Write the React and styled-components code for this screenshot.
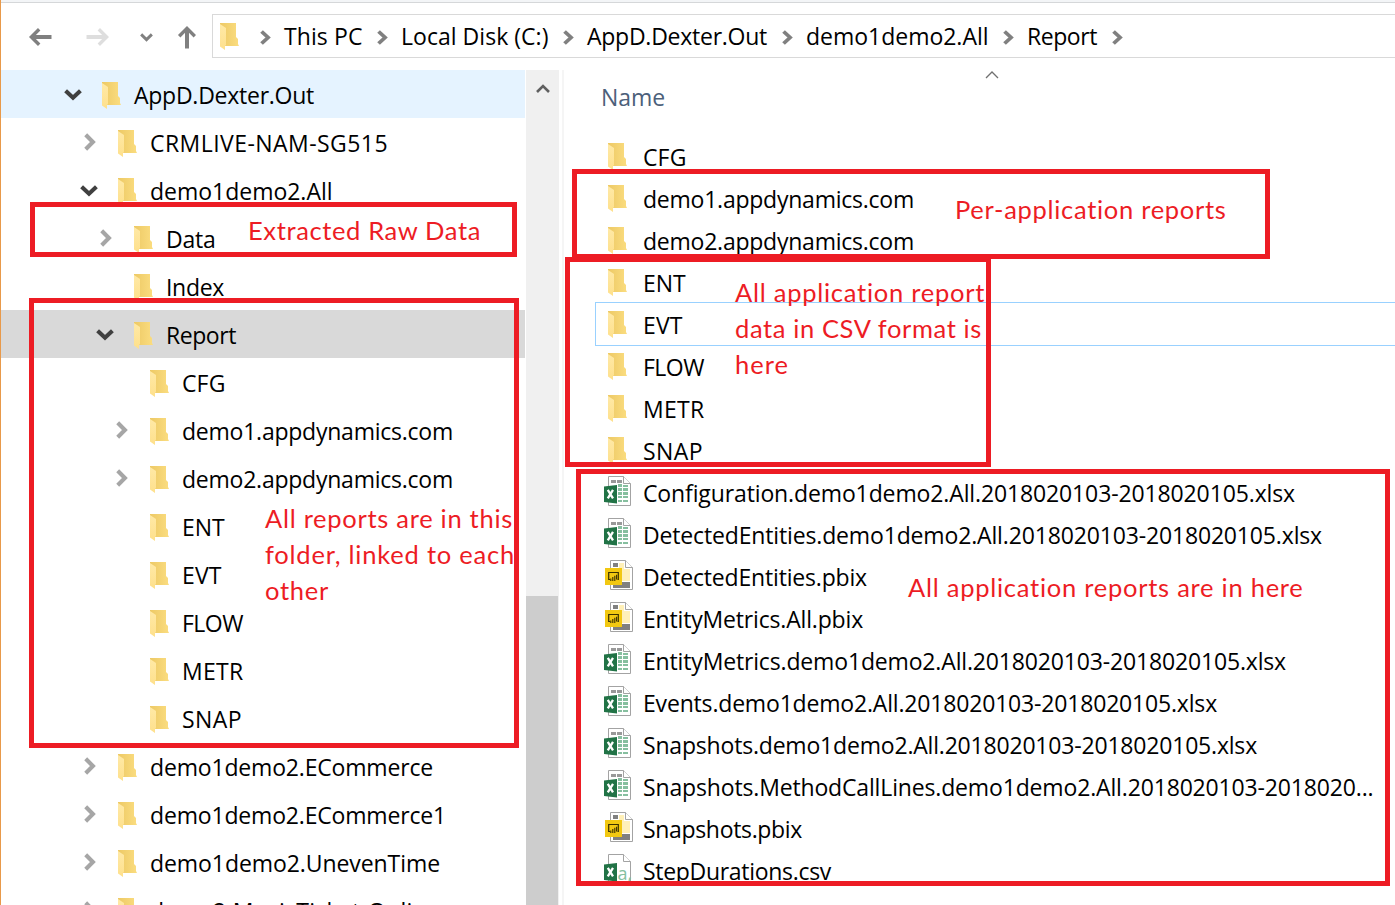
import React, { useLayoutEffect, useRef, useState } from 'react';
import styled, { createGlobalStyle, css } from 'styled-components';

const GlobalStyle = createGlobalStyle`
  * { box-sizing: border-box; }
  html, body { margin: 0; padding: 0; background: #fff; overflow: hidden; }
`;

const Window = styled.div`
  position: relative;
  display: flex;
  flex-direction: column;
  width: 1395px;
  height: 905px;
  overflow: hidden;
  background: #fff;
  border-left: 1px solid #e8994a;
  color: #000;
  font-family: 'Open Sans', 'Noto Sans', sans-serif;
  font-size: 23px;
  line-height: 32px;
`;

const TitleStrip = styled.div`
  flex: none;
  height: 3px;
  background: #f3f5f7;
  border-bottom: 1px solid #d5d7d9;
`;

const Toolbar = styled.header`
  flex: none;
  display: flex;
  height: 67px;
  padding-top: 11px;
`;

const NavButtons = styled.nav`
  flex: none;
  display: flex;
  align-items: center;
  width: 211px;
  height: 46px;
  padding-left: 27px;
`;

const NavButton = styled.button`
  display: flex;
  justify-content: center;
  width: 24px;
  padding: 0;
  margin-right: ${(p) => p.$after || 0}px;
  border: 0;
  background: none;
`;

const AddressBar = styled.div`
  flex: 1;
  display: flex;
  align-items: center;
  height: 44px;
  padding-left: 7px;
  border: 1px solid #d9d9d9;
  border-right: 0;
`;

const Crumb = styled.div`
  flex: none;
  display: flex;
  align-items: center;
  width: ${(p) => p.$width}px;
`;

const CrumbArrow = styled.span`
  display: flex;
  width: 24px;
  height: 17px;
  padding-top: 2px;
`;

const Body = styled.div`
  flex: 1;
  display: flex;
  min-height: 0;
`;

const Tree = styled.aside`
  flex: none;
  width: 524px;
  overflow: hidden;
`;

const TreeRow = styled.div`
  display: flex;
  align-items: center;
  height: 48px;
  padding-left: ${(p) => 62 + p.$level * 16}px;
  background: ${(p) => (p.$state === 'hover' ? '#e5f3ff' : p.$state === 'selected' ? '#d9d9d9' : 'transparent')};
`;

const Toggle = styled.span`
  flex: none;
  display: flex;
  justify-content: center;
  align-items: center;
  width: 20px;
  height: 20px;
  margin-right: 19px;
  padding: ${(p) => (p.$open ? '2px 0 0' : '0 0 0 2px')};
`;

const TreeIcon = styled.span`
  flex: none;
  display: flex;
  width: 32px;
  padding-top: 3px;
`;

const ScrollBar = styled.div`
  flex: none;
  display: flex;
  flex-direction: column;
  width: 33px;
  margin-left: 1px;
  background: #f0f0f0;
`;

const ScrollArrow = styled.div`
  display: flex;
  justify-content: center;
  height: 526px;
  padding-top: 13px;
`;

const ScrollThumb = styled.div`
  flex: 1;
  width: 32px;
  background: #cdcdcd;
`;

const Splitter = styled.div`
  flex: none;
  width: 2px;
  margin-left: 3px;
  background: #f5f5f5;
`;

const FilePane = styled.main`
  flex: 1;
  min-width: 0;
  padding-left: 31px;
`;

const ColumnHeader = styled.div`
  display: flex;
  flex-direction: column;
  height: 65px;
  padding-left: 6px;
  color: #4c607a;
`;

const SortMark = styled.div`
  display: flex;
  height: 11px;
  padding-left: 384px;
`;

const FileList = styled.div`
  height: 750px;
  overflow: hidden;
`;

const FileRow = styled.div`
  display: flex;
  align-items: center;
  height: 42px;
  padding-left: 8px;
  ${(p) =>
    p.$focused &&
    css`
      margin: -1px 0;
      height: 44px;
      padding-left: 7px;
      border: 1px solid #99d1ff;
      border-right: 0;
    `}
`;

const FileIcon = styled.span`
  flex: none;
  display: flex;
  width: 40px;
  padding-left: ${(p) => (p.$kind === 'folder' ? 5 : p.$kind === 'pbix' ? 2 : 1)}px;
  padding-bottom: ${(p) => (p.$kind === 'folder' ? 0 : 1)}px;
`;

const TextLine = styled.span`
  display: block;
  flex: none;
  width: max-content;
  white-space: pre;
  padding-top: ${(p) => p.$drop || 0}px;
`;

const Frame = styled.div`
  position: absolute;
  left: ${(p) => p.$x - 1}px;
  top: ${(p) => p.$y}px;
  width: ${(p) => p.$w}px;
  height: ${(p) => p.$h}px;
  border: 5px solid #ed1c24;
`;

const Note = styled.div`
  position: absolute;
  left: ${(p) => p.$x - 1}px;
  top: ${(p) => p.$y}px;
  color: #ed1c24;
  font-family: Lato, 'Open Sans', sans-serif;
  font-size: 25.5px;
  line-height: 36px;
`;

/* Single line of text tracked so that it fills the given width. */
function Line({ width, drop, children }) {
  const ref = useRef(null);
  const [spacing, setSpacing] = useState(0);
  useLayoutEffect(() => {
    const natural = ref.current.getBoundingClientRect().width;
    setSpacing((width - natural) / children.length);
  }, [width, children]);
  return (
    <TextLine ref={ref} $drop={drop} style={{ letterSpacing: `${spacing}px` }}>
      {children}
    </TextLine>
  );
}

const Folder = () => (
  <svg width="20" height="27" viewBox="0 0 20 27">
    <defs>
      <linearGradient id="back" x1="0" y1="0" x2="1" y2="0">
        <stop offset="0" stopColor="#edc965" />
        <stop offset="1" stopColor="#fbdd80" />
      </linearGradient>
      <linearGradient id="flap" x1="0" y1="0" x2="0" y2="1">
        <stop offset="0" stopColor="#ffe9a6" />
        <stop offset="1" stopColor="#fee08c" />
      </linearGradient>
    </defs>
    <path d="M0 0H16V14L18 16V21L19 23H5L0 20Z" fill="url(#back)" />
    <path d="M0 1L6 5V22L5 23V27L0 23.5Z" fill="url(#flap)" />
  </svg>
);

const ChevronRight = ({ color = '#a6a6a6', width = 12, height = 18 }) => (
  <svg width={width} height={height} viewBox="0 0 12 18" preserveAspectRatio="none">
    <path d="M1.7 1.8L8.9 9L1.7 16.2" fill="none" stroke={color} strokeWidth="4.1" />
  </svg>
);

const ChevronDown = ({ color = '#404040', width = 18, height = 12 }) => (
  <svg width={width} height={height} viewBox="0 0 18 12" preserveAspectRatio="none">
    <path d="M1.6 1.7L9 8.7L16.4 1.7" fill="none" stroke={color} strokeWidth="4.1" />
  </svg>
);

const ChevronUp = ({ width, height, color, stroke }) => (
  <svg width={width} height={height} viewBox="0 0 14 9">
    <path d="M1 8L7 2L13 8" fill="none" stroke={color} strokeWidth={stroke} />
  </svg>
);

const Arrow = ({ color, turn = 0, size = 24 }) => (
  <svg width={size} height={size} viewBox="0 0 24 24">
    <g transform={`rotate(${turn} 12 12)`} fill="none" stroke={color}>
      <path d="M3 12H23.5" strokeWidth="4" />
      <path d="M11.2 4.2L3.4 12L11.2 19.8" strokeWidth="3.4" />
    </g>
  </svg>
);

const ExcelIcon = ({ csv }) => (
  <svg width="28" height="31" viewBox="0 0 28 31">
    <path d="M4.5 .5H19.5L26.5 7.5V29.5H4.5Z" fill="#fff" stroke="#a3a3a3" />
    <path d="M19.5 .5V7.5H26.5" fill="#fff" stroke="#a3a3a3" />
    {csv ? (
      <text x="13.5" y="26" fontFamily="Open Sans, sans-serif" fontSize="18" fill="#86bf9f">a,</text>
    ) : (
      <>
        <path d="M7 4H12V7H7ZM13 4H18V7H13Z" fill="#999" />
        <path
          d="M14 8H18V11H14ZM19 9H24V11H19ZM14 12H18V15H14ZM19 12H24V15H19ZM14 16H18V19H14ZM19 16H24V19H19ZM14 20H18V22H14ZM19 20H24V22H19ZM14 24H18V26H14ZM19 24H24V26H19Z"
          fill="#86bf9f"
        />
      </>
    )}
    <path d="M0 10.5L13 9V27.5L0 26Z" fill="#217346" />
    <path d="M3.8 13.8L9 22.4M9 13.8L3.8 22.4" stroke="#fff" strokeWidth="2.3" />
  </svg>
);

const PowerBiIcon = () => (
  <svg width="29" height="31" viewBox="0 0 29 31">
    <path d="M5.5 .5H20.5L27.5 7.5V29.5H5.5Z" fill="#fff" stroke="#a3a3a3" />
    <path d="M8 3H13V7H8ZM17 22H25V28H8V25H17Z" fill="#808080" />
    <path d="M14 3H19V9H25V21H14Z" fill="#fff0b8" />
    <path d="M20.5 .5V7.5H27.5" fill="#fff" stroke="#a3a3a3" />
    <rect y="8" width="17" height="17" fill="#f2c811" />
    <path d="M5 19.5H3.7V12.5H13.3V19.5H12.5" fill="none" stroke="#3a3000" strokeWidth="1.2" />
    <path d="M5.8 18.5V21M7.8 17V21M9.8 15.8V21M11.6 14.8V19.5" stroke="#3a3000" strokeWidth="1.1" />
  </svg>
);

const icons = {
  folder: <Folder />,
  xlsx: <ExcelIcon />,
  csv: <ExcelIcon csv />,
  pbix: <PowerBiIcon />,
};

const crumbs = [
  { text: 'This PC', width: 78.5, slot: 117 },
  { text: 'Local Disk (C:)', width: 147.5, slot: 186 },
  { text: 'AppD.Dexter.Out', width: 180, slot: 219 },
  { text: 'demo1demo2.All', width: 182.5, slot: 221 },
  { text: 'Report', width: 70, slot: 109 },
];

const tree = [
  { text: 'AppD.Dexter.Out', width: 180, level: 0, open: true, state: 'hover' },
  { text: 'CRMLIVE-NAM-SG515', width: 238, level: 1, open: false },
  { text: 'demo1demo2.All', width: 182.5, level: 1, open: true },
  { text: 'Data', width: 49.5, level: 2, open: false },
  { text: 'Index', width: 58, level: 2 },
  { text: 'Report', width: 70, level: 2, open: true, state: 'selected' },
  { text: 'CFG', width: 43.5, level: 3 },
  { text: 'demo1.appdynamics.com', width: 271, level: 3, open: false },
  { text: 'demo2.appdynamics.com', width: 271, level: 3, open: false },
  { text: 'ENT', width: 42.5, level: 3 },
  { text: 'EVT', width: 39.5, level: 3 },
  { text: 'FLOW', width: 61, level: 3 },
  { text: 'METR', width: 61.5, level: 3 },
  { text: 'SNAP', width: 60, level: 3 },
  { text: 'demo1demo2.ECommerce', width: 283, level: 1, open: false },
  { text: 'demo1demo2.ECommerce1', width: 296, level: 1, open: false },
  { text: 'demo1demo2.UnevenTime', width: 290, level: 1, open: false },
  { text: 'demo2.MusicTicket-Online', width: 290, level: 1, open: false },
];

const files = [
  { text: 'CFG', width: 43.5, kind: 'folder' },
  { text: 'demo1.appdynamics.com', width: 271, kind: 'folder' },
  { text: 'demo2.appdynamics.com', width: 271, kind: 'folder' },
  { text: 'ENT', width: 42.5, kind: 'folder' },
  { text: 'EVT', width: 39.5, kind: 'folder', focused: true },
  { text: 'FLOW', width: 61, kind: 'folder' },
  { text: 'METR', width: 61.5, kind: 'folder' },
  { text: 'SNAP', width: 60, kind: 'folder' },
  { text: 'Configuration.demo1demo2.All.2018020103-2018020105.xlsx', width: 652, kind: 'xlsx' },
  { text: 'DetectedEntities.demo1demo2.All.2018020103-2018020105.xlsx', width: 679, kind: 'xlsx' },
  { text: 'DetectedEntities.pbix', width: 224, kind: 'pbix' },
  { text: 'EntityMetrics.All.pbix', width: 220, kind: 'pbix' },
  { text: 'EntityMetrics.demo1demo2.All.2018020103-2018020105.xlsx', width: 643, kind: 'xlsx' },
  { text: 'Events.demo1demo2.All.2018020103-2018020105.xlsx', width: 574, kind: 'xlsx' },
  { text: 'Snapshots.demo1demo2.All.2018020103-2018020105.xlsx', width: 614, kind: 'xlsx' },
  { text: 'Snapshots.MethodCallLines.demo1demo2.All.2018020103-2018020...', width: 730.5, kind: 'xlsx' },
  { text: 'Snapshots.pbix', width: 159, kind: 'pbix' },
  { text: 'StepDurations.csv', width: 188, kind: 'csv' },
];

const frames = [
  { x: 30, y: 202, w: 487, h: 55 },
  { x: 29, y: 298, w: 490, h: 450 },
  { x: 572, y: 169, w: 698, h: 90 },
  { x: 565, y: 257, w: 426, h: 210 },
  { x: 576, y: 469, w: 814, h: 417 },
];

const notes = [
  { x: 248, y: 212, lines: [['Extracted Raw Data', 233]] },
  { x: 955, y: 191, lines: [['Per-application reports', 272]] },
  {
    x: 735,
    y: 274,
    lines: [['All application report', 250.5], ['data in CSV format is', 247], ['here', 54]],
  },
  {
    x: 265,
    y: 500,
    lines: [['All reports are in this', 248], ['folder, linked to each', 250], ['other', 64]],
  },
  { x: 908, y: 569, lines: [['All application reports are in here', 396]] },
];

export default function App() {
  return (
    <Window>
      <GlobalStyle />
      <TitleStrip />
      <Toolbar>
        <NavButtons>
          <NavButton $after={34}><Arrow color="#808080" /></NavButton>
          <NavButton $after={24}><Arrow color="#dedede" turn={180} /></NavButton>
          <NavButton $after={17}><ChevronDown color="#808080" width={13} height={9} /></NavButton>
          <NavButton><Arrow color="#808080" turn={90} size={26} /></NavButton>
        </NavButtons>
        <AddressBar>
          <Crumb $width={40}><Folder /></Crumb>
          {crumbs.map((c) => (
            <Crumb key={c.text} $width={c.slot}>
              <CrumbArrow><ChevronRight color="#808080" width={11} height={15} /></CrumbArrow>
              <Line width={c.width}>{c.text}</Line>
            </Crumb>
          ))}
          <CrumbArrow><ChevronRight color="#808080" width={11} height={15} /></CrumbArrow>
        </AddressBar>
      </Toolbar>
      <Body>
        <Tree>
          {tree.map((row, i) => (
            <TreeRow key={i} $level={row.level} $state={row.state}>
              <Toggle $open={row.open}>
                {row.open === true && <ChevronDown />}
                {row.open === false && <ChevronRight />}
              </Toggle>
              <TreeIcon><Folder /></TreeIcon>
              <Line width={row.width} drop={2}>{row.text}</Line>
            </TreeRow>
          ))}
        </Tree>
        <ScrollBar>
          <ScrollArrow><ChevronUp width={14} height={11} color="#606060" stroke={2.6} /></ScrollArrow>
          <ScrollThumb />
        </ScrollBar>
        <Splitter />
        <FilePane>
          <ColumnHeader>
            <SortMark><ChevronUp width={14} height={9} color="#707070" stroke={1.3} /></SortMark>
            <Line width={64}>Name</Line>
          </ColumnHeader>
          <FileList>
            {files.map((f) => (
              <FileRow key={f.text} $focused={f.focused}>
                <FileIcon $kind={f.kind}>{icons[f.kind]}</FileIcon>
                <Line width={f.width} drop={2}>{f.text}</Line>
              </FileRow>
            ))}
          </FileList>
        </FilePane>
      </Body>
      {notes.map((n) => (
        <Note key={n.x} $x={n.x} $y={n.y}>
          {n.lines.map(([text, width]) => (
            <Line key={text} width={width}>{text}</Line>
          ))}
        </Note>
      ))}
      {frames.map((f) => (
        <Frame key={f.y} $x={f.x} $y={f.y} $w={f.w} $h={f.h} />
      ))}
    </Window>
  );
}
